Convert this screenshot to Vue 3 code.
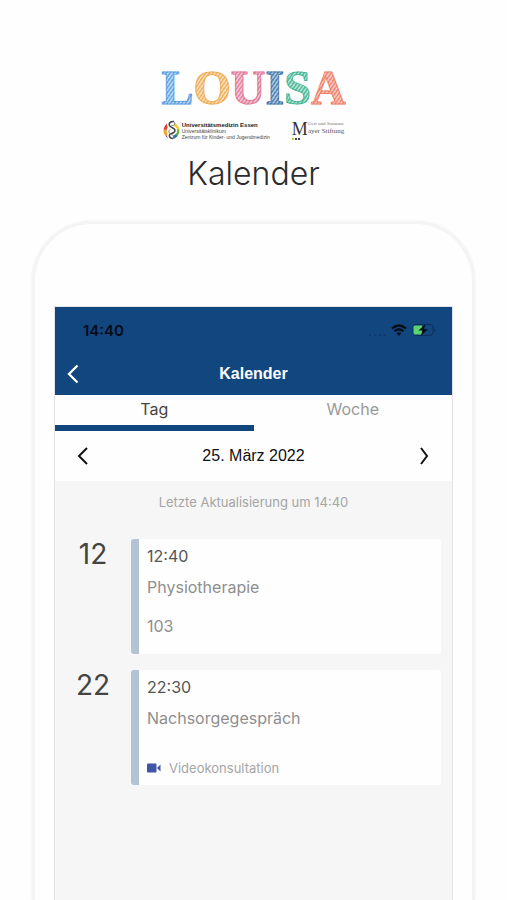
<script setup>
import { ref } from 'vue'

const activeTab = ref('Tag')
const tabs = ['Tag', 'Woche']

const logo = [
  { char: 'L', color: '#4a94de' },
  { char: 'O', color: '#eda340' },
  { char: 'U', color: '#e0688c' },
  { char: 'I', color: '#2e6ba6' },
  { char: 'S', color: '#2fae8a' },
  { char: 'A', color: '#ec7058' }
]

const appointments = [
  { hour: '12', time: '12:40', title: 'Physiotherapie', room: '103' },
  { hour: '22', time: '22:30', title: 'Nachsorgegespräch', video: 'Videokonsultation' }
]
</script>

<template>
  <div class="page">
    <header class="intro">
      <div class="logo">
        <span v-for="l in logo" :key="l.char" class="letter" :style="{ '--ink': l.color }">{{ l.char }}</span>
      </div>

      <div class="partners">
        <div class="clinic">
          <svg class="clinic-icon" viewBox="0 0 34 40" aria-hidden="true">
            <g fill="none" stroke-width="6">
              <path d="M12 8 Q5 12 4 20" stroke="#d8413a" />
              <path d="M4 19 Q4 27 9 32" stroke="#f0a42c" />
              <path d="M8 31 Q12 35 17 36" stroke="#7d4b9b" />
              <path d="M22 9 Q29 13 30 20" stroke="#f0cf2c" />
              <path d="M30 19 Q30 27 26 31" stroke="#68b345" />
              <path d="M27 30 Q23 35 17 36" stroke="#3272b8" />
            </g>
            <path d="M21 3 C9 3 11 12 18 15 C27 19 25 25 17 27 C10 29 12 36 20 37" fill="none" stroke="#fff" stroke-width="9" />
            <path d="M22 3 C10 2 10 12 18 15 C27 19 25 25 17 27 C10 29 12 36 20 37" fill="none" stroke="#444" stroke-width="3" />
            <path d="M22 3 C26 8 22 12 17 11" fill="none" stroke="#777" stroke-width="2" />
            <path d="M14 19 C9 24 13 28 19 30 C23 32 22 35 18 38" fill="none" stroke="#777" stroke-width="2" />
          </svg>
          <div class="clinic-text">
            <strong>Universitätsmedizin Essen</strong>
            <span>Universitätsklinikum</span>
            <span>Zentrum für Kinder- und Jugendmedizin</span>
          </div>
        </div>

        <div class="foundation">
          <div class="foundation-name">
            <span class="initial">M</span>
            <div class="foundation-text">
              <span class="small">Gert und Susanna</span>
              <span>ayer Stiftung</span>
            </div>
          </div>
          <div class="dots"><i></i><i></i><i></i></div>
        </div>
      </div>

      <h1>Kalender</h1>
    </header>

    <main class="phone">
      <div class="screen">
        <div class="top">
          <div class="status">
            <span class="clock">14:40</span>
            <div class="status-icons">
              <svg class="signal" width="18" height="4" viewBox="0 0 18 4" fill="#0d3a70" aria-hidden="true">
                <circle cx="2" cy="2" r="1.3" /><circle cx="7" cy="2" r="1.3" /><circle cx="12" cy="2" r="1.3" /><circle cx="16.5" cy="2" r="1.3" />
              </svg>
              <svg width="16" height="12" viewBox="0 0 16 12" aria-hidden="true">
                <path d="M1 4.5 Q8 -1.5 15 4.5" fill="none" stroke="#050b16" stroke-width="2.3" />
                <path d="M3.5 7.3 Q8 3.5 12.5 7.3" fill="none" stroke="#050b16" stroke-width="2" />
                <path d="M5.6 9.3 Q8 7.4 10.4 9.3 L8 11.8 Z" fill="#050b16" />
              </svg>
              <svg width="25" height="14" viewBox="0 0 25 14" aria-hidden="true">
                <rect x="1" y="1.5" width="20" height="11" rx="3" fill="none" stroke="#0b305f" />
                <path d="M22.5 5 Q24.5 7 22.5 9 Z" fill="#0b305f" />
                <rect x="1.5" y="2.5" width="9" height="9" rx="1.5" fill="#5ad46f" />
                <path d="M13.5 1 L6.5 7.6 H10.4 L8.8 13 L15.8 6.3 H11.9 Z" fill="#050b16" />
              </svg>
            </div>
          </div>

          <div class="bar">
            <button class="icon-button" aria-label="Zurück">
              <svg width="12" height="20" viewBox="0 0 12 20" fill="none" stroke="#fff" stroke-width="2.3"><path d="M10.5 1.5 L2 10 L10.5 18.5" /></svg>
            </button>
            <h2>Kalender</h2>
          </div>
        </div>

        <nav class="tabs">
          <button
            v-for="tab in tabs"
            :key="tab"
            class="tab"
            :class="{ active: tab === activeTab }"
            @click="activeTab = tab"
          >{{ tab }}</button>
        </nav>

        <div class="date-row">
          <button class="icon-button" aria-label="Vorheriger Tag">
            <svg width="12" height="18" viewBox="0 0 12 18" fill="none" stroke="#111" stroke-width="2"><path d="M10 1 L2 9 L10 17" /></svg>
          </button>
          <span class="date">25. März 2022</span>
          <button class="icon-button" aria-label="Nächster Tag">
            <svg width="12" height="18" viewBox="0 0 12 18" fill="none" stroke="#111" stroke-width="2"><path d="M3 1 L9 9 L3 17" /></svg>
          </button>
        </div>

        <p class="updated">Letzte Aktualisierung um 14:40</p>

        <section class="list">
          <div v-for="item in appointments" :key="item.hour" class="entry">
            <div class="hour">{{ item.hour }}</div>
            <article class="card">
              <div class="time">{{ item.time }}</div>
              <div class="title">{{ item.title }}</div>
              <div v-if="item.room" class="room">{{ item.room }}</div>
              <div v-if="item.video" class="video">
                <svg width="14" height="10" viewBox="0 0 14 10" fill="#3f55a5" aria-hidden="true">
                  <rect x="0" y="0.5" width="9.5" height="9" rx="1" />
                  <path d="M10 5 L13.5 1.5 V8.5 Z" />
                </svg>
                <span>{{ item.video }}</span>
              </div>
            </article>
          </div>
        </section>
      </div>
    </main>
  </div>
</template>

<style>
body {
  background: #fefefe;
}
</style>

<style scoped>
.page {
  display: flex;
  flex-direction: column;
  min-height: 100vh;
  box-sizing: border-box;
  padding: 64px 32px 0;
  font-family: Inter, "Liberation Sans", sans-serif;
}

.intro {
  display: flex;
  flex-direction: column;
  align-items: center;
}

.logo {
  display: flex;
  font: bold 48px/48px "Liberation Serif", serif;
}

.letter {
  color: transparent;
  background: repeating-linear-gradient(
    125deg,
    color-mix(in srgb, var(--ink) 80%, white) 0,
    color-mix(in srgb, var(--ink) 80%, white) 1px,
    color-mix(in srgb, var(--ink) 30%, white) 2px,
    color-mix(in srgb, var(--ink) 55%, white) 3px
  );
  -webkit-background-clip: text;
  background-clip: text;
  -webkit-text-stroke: 1px color-mix(in srgb, var(--ink) 70%, transparent);
}

.partners {
  display: flex;
  align-items: flex-start;
  gap: 22px;
  margin-top: 8px;
}

.clinic {
  display: flex;
  gap: 2px;
}

.clinic-icon {
  width: 17px;
  height: 20px;
}

.clinic-text {
  display: flex;
  flex-direction: column;
  padding-top: 2px;
  font-family: "Liberation Sans", sans-serif;
  font-size: 5px;
  line-height: 6px;
  color: #444;
}

.clinic-text strong {
  color: #222;
  font-size: 6px;
}

.foundation {
  color: #555;
  font-family: "Liberation Serif", serif;
}

.foundation-name {
  display: flex;
}

.initial {
  font-size: 18px;
  line-height: 18px;
  color: #333;
}

.foundation-text {
  display: flex;
  flex-direction: column;
  padding-top: 1px;
  font-size: 7px;
  line-height: 8px;
}

.foundation-text .small {
  font-size: 5px;
  line-height: 6px;
  color: #777;
}

.dots {
  display: flex;
  gap: 1px;
}

.dots i {
  width: 2px;
  height: 2px;
  background: #444;
}

.dots i:first-child {
  background: #c3cc3a;
}

h1 {
  margin: 14px 0 0;
  font-size: 32px;
  line-height: 40px;
  font-weight: 300;
  color: #2c2c2c;
}

.phone {
  flex: 1;
  display: flex;
  margin-top: 27px;
  padding: 82px 19px 0;
  border: 3px solid #f4f4f4;
  border-bottom: 0;
  border-radius: 60px 60px 0 0;
  background: #fefefe;
  box-shadow: 0 0 3px #f0f0f0;
}

.screen {
  flex: 1;
  min-width: 0;
  border: 1px solid #e2e4e6;
  border-bottom: 0;
  background: #f6f6f6;
}

.top {
  background: #12467f;
}

.status {
  display: flex;
  align-items: center;
  justify-content: space-between;
  height: 46px;
  padding: 0 15px 0 28px;
}

.clock {
  font-size: 15px;
  font-weight: 600;
  color: #050b16;
}

.status-icons {
  display: flex;
  align-items: center;
  gap: 5px;
}

.signal {
  align-self: flex-end;
}

.bar {
  display: grid;
  grid-template-columns: 36px 1fr 36px;
  align-items: center;
  height: 42px;
}

h2 {
  margin: 0;
  text-align: center;
  font: bold 16px/20px "Liberation Sans", sans-serif;
  color: #fff;
}

.icon-button {
  display: flex;
  align-items: center;
  justify-content: center;
  width: 36px;
  height: 32px;
  padding: 0;
  border: 0;
  background: none;
}

.tabs {
  display: flex;
  background: #fefefe;
}

.tab {
  flex: 1;
  height: 36px;
  padding: 0 0 2px;
  border: 0;
  border-bottom: 6px solid transparent;
  background: none;
  font: 16px/20px Inter, sans-serif;
  color: #999;
}

.tab.active {
  border-color: #12467f;
  color: #444;
}

.date-row {
  display: flex;
  align-items: center;
  justify-content: space-between;
  height: 50px;
  padding: 0 10px;
  background: #fefefe;
}

.date {
  font: 16px/20px "Liberation Sans", sans-serif;
  color: #111;
}

.updated {
  margin: 12px 0 28px;
  text-align: center;
  font-size: 13px;
  line-height: 18px;
  color: #a5a5a5;
}

.list {
  display: flex;
  flex-direction: column;
  gap: 16px;
  padding-right: 11px;
}

.entry {
  display: flex;
}

.hour {
  width: 76px;
  box-sizing: border-box;
  text-align: center;
  font-size: 28px;
  line-height: 30px;
  color: #444;
}

.card {
  flex: 1;
  box-sizing: border-box;
  min-height: 115px;
  padding: 7px 8px;
  border-left: 8px solid #b3c3d4;
  border-radius: 3px;
  background: #fefefe;
}

.time {
  font-size: 16px;
  line-height: 20px;
  color: #555;
}

.title {
  margin-top: 11px;
  font-size: 16px;
  line-height: 20px;
  color: #8e8e8e;
}

.room {
  margin-top: 19px;
  font-size: 16px;
  line-height: 20px;
  color: #8e8e8e;
}

.video {
  display: flex;
  align-items: center;
  gap: 8px;
  margin-top: 31px;
  font-size: 13px;
  line-height: 18px;
  color: #a5a5a5;
}
</style>
